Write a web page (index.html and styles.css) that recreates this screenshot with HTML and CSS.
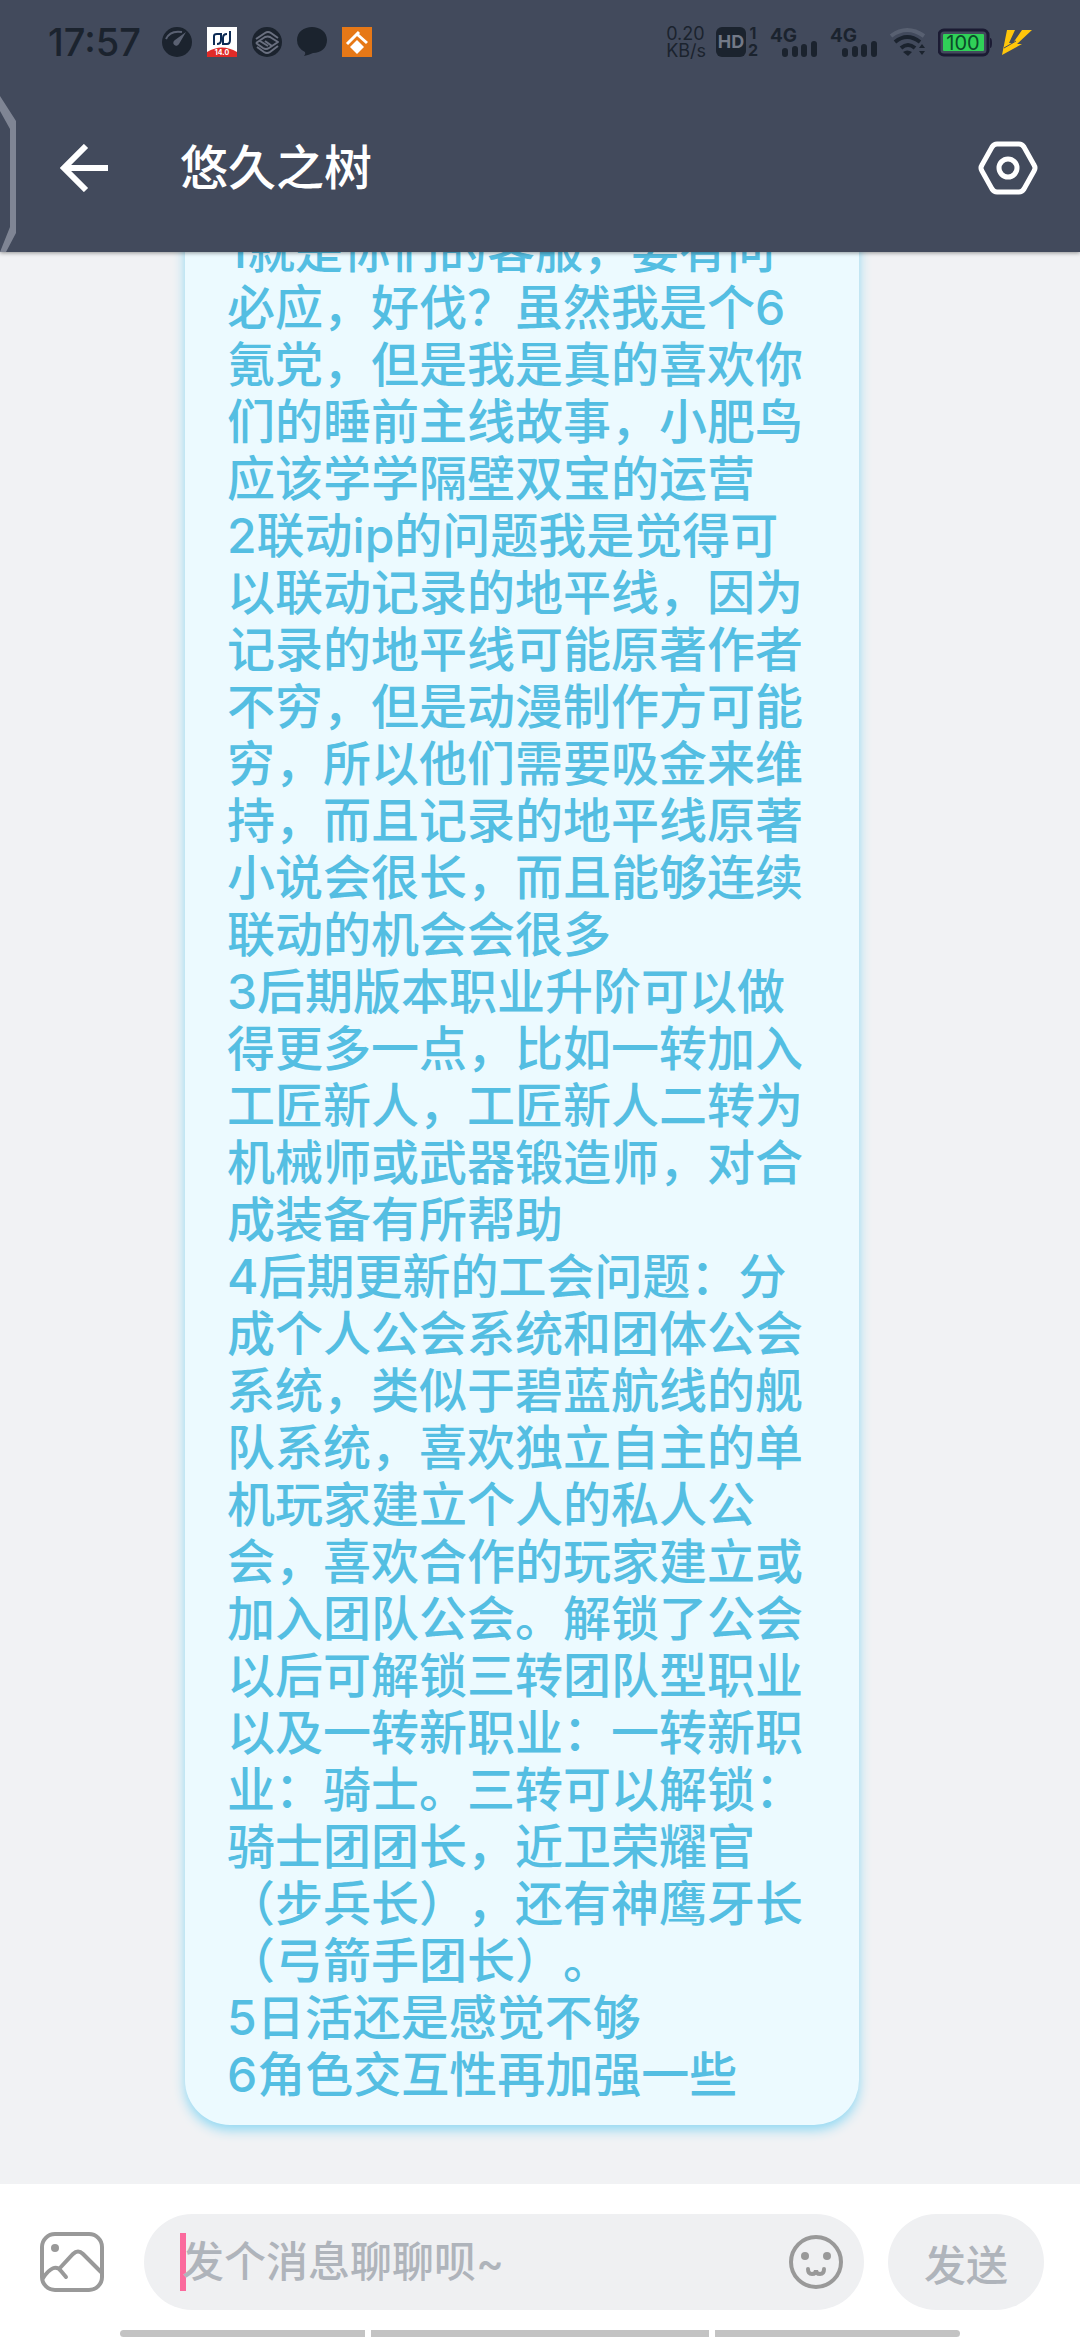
FILE: index.html
```
<!DOCTYPE html>
<html lang="zh-CN">
<head>
    <meta charset="UTF-8">
    <meta name="viewport" content="width=device-width, initial-scale=1.0">
    <title>悠久之树</title>
    <link rel="stylesheet" href="styles.css">
</head>
<body>
    <div class="page">
        <header class="header">
            <div class="status">
                <div class="status-left">
                    <span class="clock">17:57</span>
                    <svg class="app" viewBox="0 0 30 30">
                        <circle cx="15" cy="15" r="15" fill="#1b232e"/>
                        <path d="M4 12Q8 3 20 5" fill="none" stroke="#5a6172" stroke-width="2"/>
                        <path d="M24 5l-7 12a3 3 0 1 1-4-4z" fill="#5a6172"/>
                    </svg>
                    <svg class="app" viewBox="0 0 30 30">
                        <rect width="30" height="30" fill="#fff"/>
                        <path d="M0 30v-5q15-9 30 0v5z" fill="#e02b28"/>
                        <path d="M7 18V9q0-2 3-2h4v6q0 4-4 4M23 4v9q0 4-3 4h-4v-6q0-4 4-4" fill="none" stroke="#0d2b55" stroke-width="2"/>
                        <text class="app-ver" x="15" y="28" text-anchor="middle">14.0</text>
                    </svg>
                    <svg class="app" viewBox="0 0 30 30">
                        <circle cx="15" cy="15" r="15" fill="#1b232e"/>
                        <path d="M4 12l9-6q3-2 6 0l7 5M4 16l9-6q3-1 5 0l8 5-6 4-7-5M26 14M4 16l7 5q3 2 6 0l9-6M5 20l7 5q3 2 6 0l8-6M8 14l8 5" fill="none" stroke="#6a7080" stroke-width="2" stroke-linejoin="round"/>
                    </svg>
                    <svg class="app" viewBox="0 0 30 30">
                        <path d="M15 0c8 0 15 5 15 13s-6 13-14 13q-4 2-9 3 2-2 1-4-8-4-8-12C0 5 7 0 15 0z" fill="#1b232e"/>
                    </svg>
                    <svg class="app" viewBox="0 0 30 30">
                        <rect width="30" height="30" fill="#e67817"/>
                        <path d="M5 17L17 5M16 8l9 8" fill="none" stroke="#fff" stroke-width="3"/>
                        <path d="M15 13l7 7-7 7-7-7z" fill="#fff"/>
                    </svg>
                </div>
                <div class="status-right">
                    <span class="speed"><span>0.20</span><span>KB/s</span></span>
                    <svg class="hd" viewBox="0 -5 44 40">
                        <rect width="30" height="30" rx="6" fill="#1b232e"/>
                        <text class="hd-text" x="15" y="21" text-anchor="middle">HD</text>
                        <text class="sim" x="37" y="12" text-anchor="middle">1</text>
                        <text class="sim" x="37" y="29" text-anchor="middle">2</text>
                    </svg>
                    <svg class="signal" viewBox="0 -5 50 40">
                        <text class="net" x="0" y="15">4G</text>
                        <path d="M15 24v3M25 22v5M34 20v7M44 17v10" fill="none" stroke="#1b232e" stroke-width="6" stroke-linecap="round"/>
                    </svg>
                    <svg class="signal" viewBox="0 -5 50 40">
                        <text class="net" x="0" y="15">4G</text>
                        <path d="M15 24v3M25 22v5M34 20v7M44 17v10" fill="none" stroke="#1b232e" stroke-width="6" stroke-linecap="round"/>
                    </svg>
                    <svg class="wifi" viewBox="0 0 38 30">
                        <path d="M1 9q16-12 33 0" fill="none" stroke="#586071" stroke-width="4"/>
                        <path d="M5 15q12-10 25 0M11 21q7-6 14 0" fill="none" stroke="#1b232e" stroke-width="4"/>
                        <path d="M13 25q4-3 9 0l-4 4zM29 21l3-4 3 4zM29 24h6l-3 4z" fill="#1b232e"/>
                    </svg>
                    <svg class="battery" viewBox="0 -4 54 40">
                        <rect x="1" y="4" width="49" height="25" rx="5" fill="none" stroke="#1b1b33" stroke-width="3"/>
                        <rect x="5" y="8" width="41" height="17" rx="1" fill="#30d158"/>
                        <path d="M52 12q2 0 2 5t-2 5z" fill="#1b1b33"/>
                        <text class="level" x="25" y="24" text-anchor="middle">100</text>
                    </svg>
                    <svg class="bolt" viewBox="0 0 30 30">
                        <path d="M5 3h8L7 16h4L20 3h10L15 17h5L0 28z" fill="#ffc60a"/>
                        <path d="M2 21l12-7" stroke="#434b5d" stroke-width="1"/>
                    </svg>
                </div>
            </div>
            <div class="bar">
                <button class="icon-btn" aria-label="返回">
                    <svg class="back" viewBox="0 0 48 48"><path d="M48 24H4M26 2L4 24l22 22" fill="none" stroke="#fff" stroke-width="6"/></svg>
                </button>
                <h1 class="title">悠久之树</h1>
                <button class="icon-btn" aria-label="设置">
                    <svg class="setting" viewBox="0 0 60 54">
                        <path d="M19 3h22q3 0 5 3l10 18q2 3 0 6L46 48q-2 3-5 3H19q-3 0-5-3L4 30q-2-3 0-6L14 6q2-3 5-3z" fill="none" stroke="#fff" stroke-width="5"/>
                        <circle cx="30" cy="27" r="9" fill="none" stroke="#fff" stroke-width="5"/>
                    </svg>
                </button>
            </div>
            <!-- 側邊手勢條 -->
            <svg class="edge" viewBox="0 0 16 156"><path d="M0 0l16 25v112L6 156H0l10-25V33L0 15z" fill="#7f8594"/></svg>
        </header>

        <main class="chat">
            <div class="bubble">
                <p>1就是你们的客服，要有问必应，好伐？虽然我是个6氪党，但是我是真的喜欢你们的睡前主线故事，小肥鸟应该学学隔壁双宝的运营</p>
                <p>2联动ip的问题我是觉得可以联动记录的地平线，因为记录的地平线可能原著作者不穷，但是动漫制作方可能穷，所以他们需要吸金来维持，而且记录的地平线原著小说会很长，而且能够连续联动的机会会很多</p>
                <p>3后期版本职业升阶可以做得更多一点，比如一转加入工匠新人，工匠新人二转为机械师或武器锻造师，对合成装备有所帮助</p>
                <p>4后期更新的工会问题：分成个人公会系统和团体公会系统，类似于碧蓝航线的舰队系统，喜欢独立自主的单机玩家建立个人的私人公会，喜欢合作的玩家建立或加入团队公会。解锁了公会以后可解锁三转团队型职业以及一转新职业：一转新职业：骑士。三转可以解锁：骑士团团长，近卫荣耀官（步兵长），还有神鹰牙长（弓箭手团长）。</p>
                <p>5日活还是感觉不够</p>
                <p>6角色交互性再加强一些</p>
            </div>
        </main>

        <footer class="footer">
            <form class="composer">
                <button class="icon-btn" type="button" aria-label="图片">
                    <svg class="picture" viewBox="0 0 64 60">
                        <rect x="2" y="2" width="60" height="56" rx="13" fill="none" stroke="#999" stroke-width="4"/>
                        <circle cx="15" cy="16" r="4" fill="#999"/>
                        <path d="M3 46q11-16 18-7l5 6M19 37l14-15q5-5 10 0l18 18" fill="none" stroke="#999" stroke-width="4" stroke-linecap="round"/>
                    </svg>
                </button>
                <div class="field">
                    <span class="caret"></span>
                    <input class="input" type="text" placeholder="发个消息聊聊呗~" aria-label="消息">
                    <button class="icon-btn" type="button" aria-label="表情">
                        <svg class="face" viewBox="0 0 54 54">
                            <circle cx="27" cy="27" r="25" fill="none" stroke="#999" stroke-width="4"/>
                            <circle cx="16" cy="21" r="4" fill="#999"/>
                            <circle cx="38" cy="21" r="4" fill="#999"/>
                            <path d="M19 34q0 5 4 5t4-4q0 4 4 4t4-5" fill="none" stroke="#999" stroke-width="4" stroke-linecap="round"/>
                        </svg>
                    </button>
                </div>
                <button class="send" type="submit">发送</button>
            </form>
            <div class="nav">
                <span class="nav-line"></span>
                <span class="nav-line nav-mid"></span>
                <span class="nav-line"></span>
            </div>
        </footer>
    </div>
</body>
</html>
```
FILE: styles.css
```
*{
    box-sizing:border-box;
}
body{
    margin:0;
    font-family:Inter, "Noto Sans CJK SC", sans-serif;
    background:#f1f2f4;
}
button{
    padding:0;
    border:0;
    background:none;
    font-family:inherit;
    cursor:pointer;
}
svg{
    display:block;
}
.page{
    height:100vh;
    display:flex;
    flex-flow:column nowrap;
}

/* header */
.header{
    position:relative;
    z-index:1;
    background:#424a5c;
    box-shadow:0 1px 4px rgba(0,0,0,.4);
}
.status{
    height:84px;
    padding:0 48px;
    display:flex;
    justify-content:space-between;
    align-items:center;
    color:#1b232e;
}
.status-left{
    display:flex;
    align-items:center;
    gap:15px;
}
.clock{
    margin-right:6px;
    font-size:38px;
    line-height:48px;
    font-weight:500;
}
.app{
    width:30px;
    height:30px;
}
.app-ver{
    font-size:7px;
    font-weight:700;
    fill:#fff;
}
.status-right{
    display:flex;
    align-items:center;
    gap:10px;
}
.speed{
    display:flex;
    flex-flow:column nowrap;
    font-size:18px;
    line-height:17px;
}
.hd{
    width:44px;
    height:40px;
}
.hd-text{
    font-size:18px;
    font-weight:700;
    fill:#737987;
}
.sim{
    font-size:16px;
    font-weight:700;
    fill:#1b232e;
}
.signal{
    width:50px;
    height:40px;
}
.net{
    font-size:19px;
    font-weight:700;
    fill:#1b232e;
}
.wifi{
    width:38px;
    height:30px;
}
.battery{
    width:54px;
    height:40px;
}
.level{
    font-size:20px;
    fill:#0b4a2a;
}
.bolt{
    width:30px;
    height:30px;
}
.bar{
    height:168px;
    padding:0 42px 0 60px;
    display:flex;
    align-items:center;
}
.back{
    width:48px;
    height:48px;
}
.title{
    flex:1;
    margin:0 0 0 72px;
    font-size:48px;
    line-height:60px;
    font-weight:500;
    color:#fff;
}
.setting{
    width:60px;
    height:54px;
}
.edge{
    position:absolute;
    left:0;
    bottom:0;
    width:16px;
    height:156px;
}

/* chat */
.chat{
    flex:1;
    min-height:0;
    overflow:hidden;
    padding:0 20% 59px 185px;
    display:flex;
    flex-flow:column nowrap;
    justify-content:flex-end;
    align-items:flex-start;
}
.bubble{
    max-width:674px;
    padding:22px 42px;
    border-radius:45px;
    background:#ecfaff;
    box-shadow:0 5px 12px #8fd8f3;
    font-size:48px;
    line-height:57px;
    font-weight:500;
    color:#54bee2;
    text-spacing-trim:space-all;
}
.bubble p{
    margin:0;
}

/* footer */
.footer{
    background:#fff;
}
.composer{
    padding:30px 36px 20px 40px;
    display:flex;
    align-items:center;
}
.picture{
    width:64px;
    height:60px;
}
.field{
    position:relative;
    flex:1;
    min-width:0;
    height:96px;
    margin:0 24px 0 40px;
    padding:0 21px 0 38px;
    display:flex;
    align-items:center;
    border-radius:48px;
    background:#eff0f2;
}
.caret{
    position:absolute;
    left:36px;
    top:19px;
    width:6px;
    height:58px;
    background:#fb6a9d;
}
.input{
    position:relative;
    flex:1;
    min-width:0;
    padding:0;
    border:0;
    outline:0;
    background:none;
    font-family:inherit;
    font-size:42px;
    line-height:60px;
    font-weight:500;
}
.input::placeholder{
    color:#afb4bb;
    opacity:1;
}
.face{
    width:54px;
    height:54px;
}
.send{
    flex:none;
    padding:0 36px;
    height:96px;
    border-radius:48px;
    background:#eff0f2;
    font-size:42px;
    font-weight:500;
    color:#afb4bb;
}
.nav{
    padding:0 120px 3px;
    display:flex;
    gap:6px;
}
.nav-line{
    flex:245;
    height:7px;
    background:#c3c3c3;
}
.nav-mid{
    flex:338;
}
.nav-line:first-child{
    border-radius:4px 0 0 4px;
}
.nav-line:last-child{
    border-radius:0 4px 4px 0;
}
```
